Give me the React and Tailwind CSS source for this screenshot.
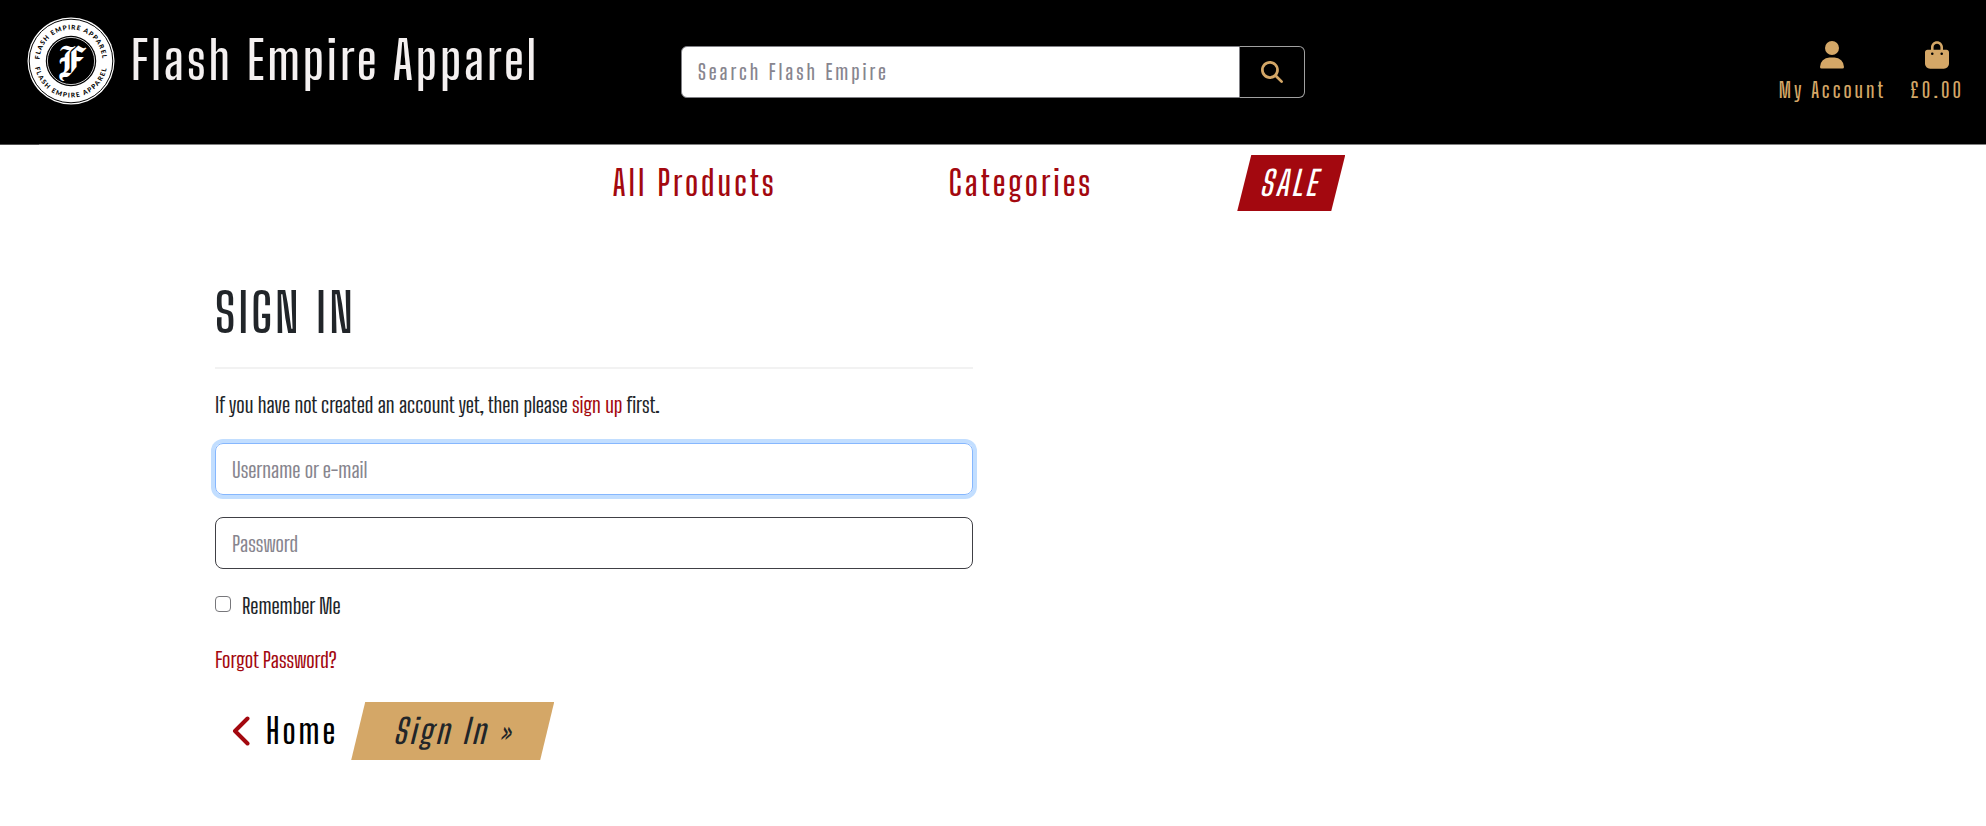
import React from "react";

function Logo() {
  return (
    <svg viewBox="0 0 88 88" className="size-22 shrink-0" role="img" aria-label="Flash Empire Apparel logo">
      <defs>
        <path id="ring-top" d="M 12.500 44 A 31.500 31.500 0 0 1 75.500 44" />
        <path id="ring-bottom" d="M 7.500 44 A 36.500 36.500 0 0 0 80.500 44" />
      </defs>
      <circle cx="44" cy="44" r="43.5" fill="#fff" />
      <circle cx="44" cy="44" r="41.8" fill="none" stroke="#000" strokeWidth="1" />
      <circle cx="44" cy="44" r="25.2" fill="#000" />
      <circle cx="44" cy="44" r="23.6" fill="none" stroke="#fff" strokeWidth="0.8" />
      <g fill="#000" fontFamily="Lato, sans-serif" fontWeight="900" fontSize="6.5" textAnchor="middle">
        <text letterSpacing="1"><textPath href="#ring-top" startOffset="50%">FLASH EMPIRE APPAREL</textPath></text>
        <text letterSpacing="1.3"><textPath href="#ring-bottom" startOffset="50%">FLASH EMPIRE APPAREL</textPath></text>
      </g>
      <text x="43" y="58" fill="#fff" fontSize="44" fontWeight="400" textAnchor="middle" fontFamily="'Manufacturing Consent', 'UnifrakturMaguntia', serif">F</text>
    </svg>
  );
}

function UserIcon() {
  return (
    <svg viewBox="0 0 24 28" className="h-7 w-6" fill="currentColor" aria-hidden="true">
      <circle cx="12" cy="7" r="7" />
      <path d="M9.5 16.500h5A9.500 9.500 0 0 1 24 26a1.600 1.600 0 0 1-1.600 1.600H1.600A1.600 1.600 0 0 1 0 26a9.500 9.500 0 0 1 9.500-9.500z" />
    </svg>
  );
}

function BagIcon() {
  return (
    <svg viewBox="0 0 448 512" className="h-7 w-6" fill="currentColor" aria-hidden="true">
      <path d="M160 112c0-35.300 28.700-64 64-64s64 28.700 64 64v48H160V112zm-48 48H48c-26.500 0-48 21.500-48 48V416c0 53 43 96 96 96H352c53 0 96-43 96-96V208c0-26.500-21.500-48-48-48H336V112C336 50.100 285.900 0 224 0S112 50.100 112 112v48zm24 48a24 24 0 1 1 0 48 24 24 0 1 1 0-48zm152 24a24 24 0 1 1 48 0 24 24 0 1 1-48 0z" />
    </svg>
  );
}

function SearchIcon() {
  return (
    <svg viewBox="0 0 512 512" className="size-[22px]" fill="currentColor" aria-hidden="true">
      <path d="M416 208c0 45.900-14.900 88.300-40 122.700L502.600 457.400c12.500 12.500 12.500 32.800 0 45.300s-32.800 12.500-45.300 0L330.700 376c-34.400 25.200-76.800 40-122.700 40C93.100 416 0 322.900 0 208S93.100 0 208 0S416 93.100 416 208zM208 352a144 144 0 1 0 0-288 144 144 0 1 0 0 288z" />
    </svg>
  );
}

function ChevronLeft() {
  return (
    <svg viewBox="0 0 18 30" className="h-[30px] w-[18px] text-[#a3080f]" fill="none" stroke="currentColor" strokeWidth="4" strokeLinecap="round" strokeLinejoin="round" aria-hidden="true">
      <path d="M15.500 2.500 3 15l12.500 12.500" />
    </svg>
  );
}

const bodyText = "font-['Big_Shoulders_Text','Liberation_Sans_Narrow','Arial_Narrow',sans-serif] font-normal";

export default function App() {
  return (
    <div className="min-h-screen bg-white font-['Big_Shoulders_Display','Liberation_Sans_Narrow','Arial_Narrow',sans-serif] text-[21px] font-semibold text-[#212529]">
      <header className="grid h-36 grid-cols-[1fr_624px_1fr] items-start bg-black">
        <a href="#home" className="flex items-center gap-4 pt-[17px] pl-[27px] text-[#f4f0f0]">
          <Logo />
          <span className="pb-1 text-[53px] leading-none tracking-[3px] whitespace-nowrap">Flash Empire Apparel</span>
        </a>
        <form className="mt-[46px] flex h-[52px]" onSubmit={(e) => e.preventDefault()}>
          <input type="search" aria-label="Search Flash Empire" placeholder="Search Flash Empire" className="min-w-0 flex-1 rounded-l-md border border-[#808085] bg-white px-4 tracking-[3px] outline-none placeholder:text-[#87858e]" />
          <button type="submit" aria-label="Search" className="flex w-[65px] items-center justify-center rounded-r-md border border-l-0 border-[#a0a0a0] bg-black text-[#d4a767]">
            <SearchIcon />
          </button>
        </form>
        <nav aria-label="Account" className="flex justify-end gap-6 pt-[41px] pr-[22px] text-[#d4a767]">
          <a href="#account" className="flex flex-col items-center gap-[7px] leading-7 tracking-[3px]">
            <UserIcon />
            My Account
          </a>
          <a href="#bag" className="flex flex-col items-center gap-[7px] leading-7 tracking-[3px]">
            <BagIcon />
            £0.00
          </a>
        </nav>
      </header>
      <div className="h-px bg-[#808080]">
        <div className="h-px w-[39px] bg-[#505050]" />
      </div>

      <nav aria-label="Main" className="flex justify-center pt-[10px] pr-7 text-[34px] leading-[56px] tracking-[3px] text-[#a3080f]">
        <a href="#products" className="mr-[172px]">All Products</a>
        <a href="#categories" className="mr-36">Categories</a>
        <a href="#sale" className="w-27 bg-[#a3080f] pr-1 text-center text-white italic [clip-path:polygon(14px_0,100%_0,calc(100%-14px)_100%,0_100%)]">SALE</a>
      </nav>

      <main className="mx-auto grid max-w-[1556px] grid-cols-2 gap-10 pt-[70px]">
        <section>
          <h1 className="text-[54px] leading-16 tracking-[3px]">SIGN IN</h1>
          <hr className="mt-[22px] border-t-2 border-[#f2f2f2]" />
          <p className={`mt-5 leading-8 ${bodyText}`}>
            If you have not created an account yet, then please <a href="#signup" className="text-[#a3080f]">sign up</a> first.
          </p>
          <form onSubmit={(e) => e.preventDefault()}>
            <div className={bodyText}>
              <input type="text" aria-label="Username or e-mail" placeholder="Username or e-mail" className="mt-[22px] block h-[52px] w-full rounded-lg border border-[#86b7fe] px-4 ring-4 ring-[#c2deff] outline-none placeholder:text-[#87858e]" />
              <input type="password" aria-label="Password" placeholder="Password" className="mt-[22px] block h-[52px] w-full rounded-lg border border-[#404045] px-4 outline-none placeholder:text-[#87858e]" />
              <div className="mt-[21px] flex items-center gap-[11px]">
                <input id="remember" type="checkbox" className="mb-1 size-4 appearance-none rounded border border-[#77777b] bg-white checked:bg-[#a3080f]" />
                <label htmlFor="remember" className="leading-8">Remember Me</label>
              </div>
              <a href="#forgot" className="mt-[22px] block w-fit leading-8 text-[#a3080f]">Forgot Password?</a>
            </div>
            <div className="mt-[26px] flex items-center text-[34px] tracking-[3px]">
              <a href="#home" className="flex items-center gap-4 pr-[13px] pl-[17px] text-black">
                <ChevronLeft />
                Home
              </a>
              <button type="submit" className="h-[58px] w-[203px] bg-[#d4a767] tracking-[3px] italic [clip-path:polygon(14px_0,100%_0,calc(100%-14px)_100%,0_100%)]">Sign In »</button>
            </div>
          </form>
        </section>
      </main>
    </div>
  );
}
